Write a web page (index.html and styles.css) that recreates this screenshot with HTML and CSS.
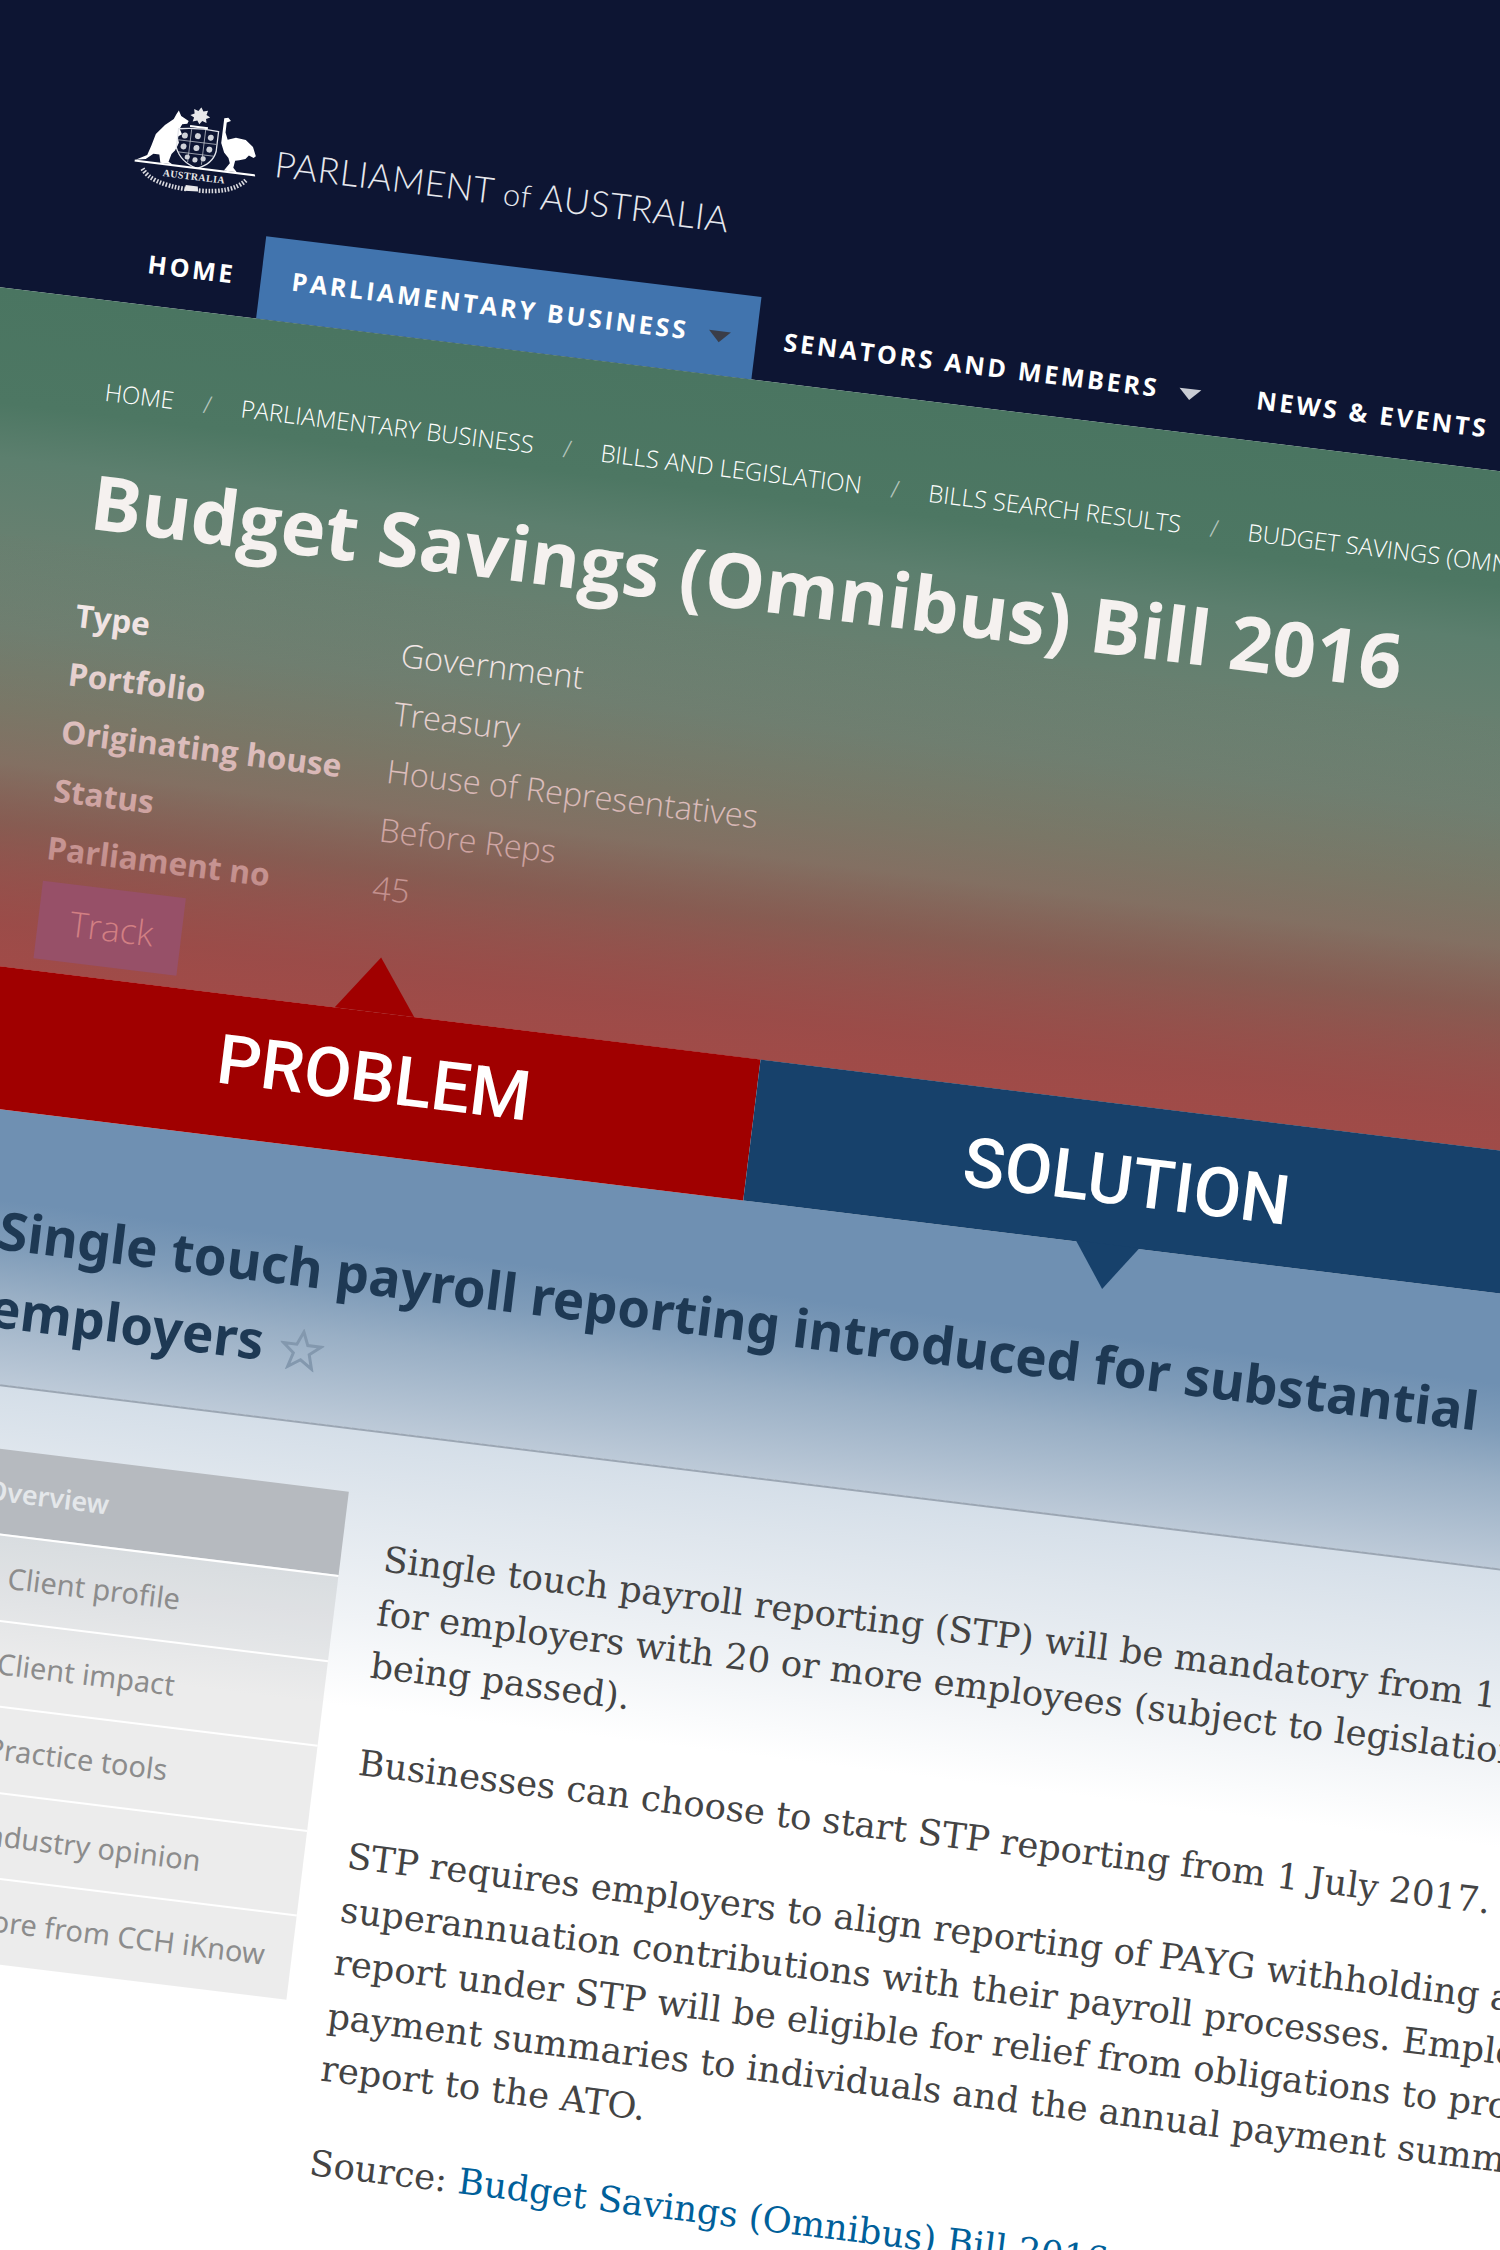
FILE: index.html
```html
<!DOCTYPE html>
<html lang="en">
  <head>
    <meta charset="UTF-8" />
    <title>Budget Savings (Omnibus) Bill 2016</title>
    <link rel="stylesheet" href="styles.css">
  </head>
  <body>
    <div class="page">
      <header class="site-header">
        <div class="logo">
          <svg class="crest" viewBox="0 0 122 86" width="122" height="86">
            <!-- kangaroo -->
            <path fill="#fff" d="M38 6L41 11L49 15L48 18L43 19L41 24L44 29L40 32L42 38L39 46L36 50L34 58L38 60L26 60L24 52L18 52L11 58L1 60L12 54L15 44L18 32L26 22L34 15L36 10Z"/>
            <!-- emu -->
            <path fill="#fff" d="M84 8L88 7L91 10L87 12L87 22L90 29L98 26L108 27L116 33L120 42L118 44L113 42L110 46L104 48L100 49L99 56L103 60L90 60L95 52L93 47L88 42L84 33Z"/>
            <!-- shield -->
            <path fill="none" stroke="#e4e6ec" stroke-width="1.3" d="M40 24q20 -4 40 -2v20q-2 13-17 19q-17-4-23-18z"/>
            <path fill="none" stroke="#c9ccd4" stroke-width=".7" d="M53 23v33M67 22v35M41 35h38M42 47h36"/>
            <g fill="#cfd2d9">
              <circle cx="47" cy="30" r="3"/><circle cx="60" cy="29" r="3"/><circle cx="73" cy="29" r="3"/>
              <circle cx="47" cy="41" r="3"/><circle cx="60" cy="41" r="3"/><circle cx="73" cy="41" r="3"/>
              <circle cx="52" cy="51" r="2.6"/><circle cx="60" cy="53" r="2.6"/><circle cx="68" cy="51" r="2.6"/>
            </g>
            <!-- star and wreath -->
            <polygon fill="#e8e8ea" points="60,0 62.5,4 67,2.5 66,7 70,9 66,11 67,15 62.5,13.5 60,17 57.5,13.5 53,15 54,11 50,9 54,7 53,2.5 57.5,4"/>
            <path fill="none" stroke="#fff" stroke-width="2" d="M51 20h18"/>
            <!-- ground bar -->
            <path fill="#fff" d="M0 60l121 0 1 2-122 0z"/>
            <text class="crest-name" x="61" y="73" text-anchor="middle">AUSTRALIA</text>
            <!-- laurels -->
            <path fill="none" stroke="#d9d9de" stroke-width="4.5" stroke-dasharray="1.6 1.6" d="M9 68q10 14 46 15M113 67q-12 15-47 16"/>
            <path fill="#e8e8ea" d="M54 79l12 0 1 5-14 1z"/>
          </svg>
          <div class="logo-text">PARLIAMENT <span class="logo-of">of</span> AUSTRALIA</div>
        </div>
        <nav class="main-nav">
          <a class="nav-item nav-home">HOME</a>
          <a class="nav-item nav-active">PARLIAMENTARY BUSINESS<span class="caret caret-dark"></span></a>
          <a class="nav-item">SENATORS AND MEMBERS<span class="caret"></span></a>
          <a class="nav-item">NEWS &amp; EVENTS</a>
        </nav>
      </header>

      <section class="hero">
        <div class="breadcrumb">
          <a>HOME</a><span class="sep">/</span>
          <a>PARLIAMENTARY BUSINESS</a><span class="sep">/</span>
          <a>BILLS AND LEGISLATION</a><span class="sep">/</span>
          <a>BILLS SEARCH RESULTS</a><span class="sep">/</span>
          <a>BUDGET SAVINGS (OMNIBUS) BILL 2016</a>
        </div>
        <h1 class="bill-title">Budget Savings (Omnibus) Bill 2016</h1>
        <dl class="bill-meta">
          <dt>Type</dt><dd>Government</dd>
          <dt>Portfolio</dt><dd>Treasury</dd>
          <dt>Originating house</dt><dd>House of Representatives</dd>
          <dt>Status</dt><dd>Before Reps</dd>
          <dt>Parliament no</dt><dd>45</dd>
        </dl>
        <a class="track-btn">Track</a>
      </section>

      <div class="split">
        <div class="split-problem">PROBLEM</div>
        <div class="split-solution">SOLUTION</div>
      </div>

      <section class="content">
        <h2 class="article-title">Single touch payroll reporting introduced for substantial<br />employers
          <svg class="star" viewBox="0 0 44 42" width="44" height="42">
            <polygon fill="none" stroke="#8398ae" stroke-width="3" points="22,3 27.5,16 41,16 30,25 34,39 22,31 10,39 14,25 3,16 16.5,16"/>
          </svg>
        </h2>
        <div class="columns">
          <ul class="side-menu">
            <li class="side-head">Overview</li>
            <li>Client profile</li>
            <li>Client impact</li>
            <li>Practice tools</li>
            <li>Industry opinion</li>
            <li>More from CCH iKnow</li>
          </ul>
          <div class="article">
            <p>Single touch payroll reporting (STP) will be mandatory from 1 July 2018<br />for employers with 20 or more employees (subject to legislation<br />being passed).</p>
            <p>Businesses can choose to start STP reporting from 1 July 2017.</p>
            <p>STP requires employers to align reporting of PAYG withholding and<br />superannuation contributions with their payroll processes. Employers that<br />report under STP will be eligible for relief from obligations to provide<br />payment summaries to individuals and the annual payment summary<br />report to the ATO.</p>
            <p>Source: <a>Budget Savings (Omnibus) Bill 2016</a></p>
          </div>
        </div>
      </section>
    </div>
  </body>
</html>
```

FILE: styles.css
```css
html, body {
  margin: 0;
  padding: 0;
  width: 1500px;
  height: 2250px;
  overflow: hidden;
  background: #fff;
}

/* whole page is tilted, everything inside is normal flow */
.page {
  width: 1800px;
  height: 2600px;
  transform-origin: 0 0;
  transform: rotate(7deg) translate(-20px, -200px);
  font-family: "Open Sans", sans-serif;
}

.site-header {
  background: #0d1533;
  height: 485px;
  box-sizing: border-box;
  padding: 282px 0 0 173px;
}

.logo {
  display: flex;
  height: 120px;
  gap: 18px;
  color: #e6e8ee;
}

.crest-name {
  font-family: "Liberation Serif", serif;
  font-weight: bold;
  font-size: 10px;
  letter-spacing: .4px;
  fill: #e8e8ea;
}

.logo-text {
  font-family: Lato, sans-serif;
  font-weight: 300;
  font-size: 35.8px;
  line-height: 40px;
  margin-top: 27px;
  letter-spacing: .5px;
  white-space: nowrap;
}

.logo-of {
  font-size: 31px;
}

.main-nav {
  display: flex;
  height: 83px;
  margin-left: -2px;
}

.nav-item {
  padding: 0 28px;
  line-height: 83px;
  font-size: 25px;
  font-weight: 700;
  letter-spacing: 2.85px;
  color: #fff;
  white-space: nowrap;
}

.nav-home {
  padding-right: 26px;
}

.nav-active {
  background: #4174ae;
  padding-left: 31px;
  padding-right: 26px;
}

.caret {
  display: inline-block;
  vertical-align: middle;
  margin-left: 20px;
  border-left: 11px solid transparent;
  border-right: 11px solid transparent;
  border-top: 11px solid #c9ccd4;
}

.caret-dark {
  border-top-color: #3a3d48;
}

.hero {
  position: relative;
  height: 674px;
  box-sizing: border-box;
  padding: 75px 0 0 171px;
  background: linear-gradient(#4a7561 0, #4d7763 17%, #5c7f6e 25%, #678070 37%, #648a79 50%, #668e77 62%, #6b8e78 70%, #66725f 79%, #8b4e4a 94%, #a04b48 100%);
  color: #fff;
}

/* red wash that eats the text toward the bottom */
.hero::after {
  content: "";
  position: absolute;
  left: 0;
  right: 0;
  top: 0;
  bottom: 0;
  background: linear-gradient(rgba(160, 75, 72, 0) 36%, rgba(160, 75, 72, .85) 100%);
}

.breadcrumb {
  display: flex;
  gap: 29.6px;
  margin-left: 1px;
  font-size: 24px;
  font-weight: 300;
  line-height: 32px;
  white-space: nowrap;
}

.sep {
  opacity: .6;
}

.bill-title {
  margin: 47px 0 0 1px;
  font-size: 75.8px;
  line-height: 92px;
  font-weight: 700;
  white-space: nowrap;
  color: #f5f1ef;
}

.bill-meta {
  display: grid;
  grid-template-columns: 328px 1fr;
  grid-auto-rows: 58.5px;
  margin: 41px 0 0 -1px;
  line-height: 58.5px;
}

.bill-meta dt {
  font-size: 31.6px;
  font-weight: 700;
}

.bill-meta dd {
  margin: 0;
  font-size: 32.5px;
  font-weight: 300;
}

.track-btn {
  position: relative;
  z-index: 1;
  display: block;
  width: 144px;
  height: 78px;
  box-sizing: border-box;
  margin: 4px 0 0 -1px;
  padding-left: 32px;
  font-size: 35px;
  font-weight: 300;
  line-height: 78px;
  background: #975068;
  color: #d27f83;
}

.split {
  display: flex;
  height: 142px;
  font-family: Roboto, sans-serif;
  font-weight: 500;
  font-size: 69px;
  color: #fff;
  white-space: nowrap;
}

.split-problem {
  position: relative;
  flex: 0 0 904px;
  box-sizing: border-box;
  padding-left: 365px;
  line-height: 132px;
  background: #a00000;
}

.split-problem::before {
  content: "";
  position: absolute;
  left: 475px;
  bottom: 100%;
  border-left: 40px solid transparent;
  border-right: 40px solid transparent;
  border-bottom: 55px solid #a00000;
}

.split-solution {
  position: relative;
  flex: 1;
  box-sizing: border-box;
  padding-left: 214px;
  line-height: 154px;
  background: #17416b;
}

.split-solution::after {
  content: "";
  position: absolute;
  left: 335px;
  top: calc(100% - 1px);
  border-left: 32px solid transparent;
  border-right: 32px solid transparent;
  border-top: 45px solid #17416b;
}

/* the hr sits on a hard step of the fade */
.content {
  padding: 79px 0 0 172px;
  background: linear-gradient(#6f90b2 0, #6f90b2 90px, #7f9cb9 135px, #99afc5 184px, #bdcad8 273px, #d4dee8 273px, #dfe6ed 340px, #f0f3f6 460px, #fff 550px);
  height: 1200px;
}

.article-title {
  margin: 0 0 0 -3px;
  padding-bottom: 38px;
  border-bottom: 2px solid #9ba6b3;
  font-family: "Noto Sans", sans-serif;
  font-size: 52.9px;
  line-height: 78px;
  font-weight: 700;
  color: #1e3954;
  white-space: nowrap;
}

.star {
  vertical-align: -6px;
  margin-left: 3px;
}

.columns {
  display: flex;
  gap: 43px;
  margin-top: 62px;
}

.side-menu {
  flex: 0 0 376px;
  margin: 0;
  padding: 0;
  list-style: none;
  font-family: "Noto Sans", sans-serif;
  font-size: 29px;
  color: #8c8c8c;
}

.side-menu li {
  height: 85.6px;
  box-sizing: border-box;
  padding: 0 0 0 48px;
  line-height: 82px;
  background: rgba(0, 0, 0, .075);
  border-top: 2px solid #fff;
}

.side-menu .side-head {
  height: 84px;
  padding: 0 0 0 16px;
  font-size: 27px;
  line-height: 84px;
  font-weight: 600;
  color: #e4e7ea;
  background: #b6babf;
  border-top: 0;
}

.article {
  padding-top: 36px;
  font-family: "DejaVu Serif", serif;
  font-size: 35.5px;
  line-height: 53.5px;
  color: #444;
  white-space: nowrap;
}

.article p {
  margin: 0 0 41px;
}

.article p:first-child {
  margin-bottom: 44px;
}

.article a {
  color: #00609a;
}
```
